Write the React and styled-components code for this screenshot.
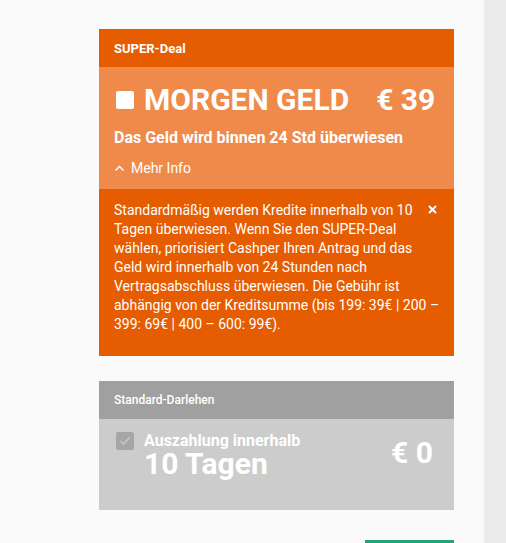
import React, { useState } from 'react'
import styled, { createGlobalStyle } from 'styled-components'

const GlobalStyle = createGlobalStyle`
  html, body {
    margin: 0;
    padding: 0;
    background: #fafafa;
    font-family: Roboto, "Liberation Sans", Arial, sans-serif;
    -webkit-font-smoothing: antialiased;
  }
`

const Layout = styled.div`
  display: grid;
  grid-template-columns: 1fr 22px;
  height: 543px;
  overflow: hidden;
`

const Main = styled.main`
  padding: 29px 0 0 99px;
  display: flex;
  flex-direction: column;
  width: 355px;
`

const Side = styled.aside`
  background: #ebebeb;
`

const Card = styled.section`
  display: flex;
  flex-direction: column;
  color: #fff;
  margin-bottom: ${p => p.$gap || 0}px;
`

const CardHead = styled.div`
  height: 38px;
  display: flex;
  align-items: center;
  padding: 0 15px;
  font-size: ${p => (p.$muted ? 12 : 13)}px;
  font-weight: ${p => (p.$muted ? 500 : 700)};
  background: ${p => (p.$muted ? '#a0a0a0' : '#e65c00')};
`

const DealBody = styled.div`
  background: #ef8a4a;
  padding: 16px 15px 0;
  height: 122px;
  box-sizing: border-box;
`

const TitleRow = styled.div`
  display: flex;
  align-items: center;
  font-size: 30px;
  font-weight: 700;
  line-height: 34px;
`

const Box = styled.span`
  width: 18px;
  height: 18px;
  border-radius: 2px;
  background: #fff;
  margin: 0 10px 0 2px;
  flex: none;
`

const Price = styled.span`
  margin-left: 27px;
`

const Sub = styled.div`
  margin-top: 11px;
  font-size: 16px;
  font-weight: 700;
  line-height: 20px;
`

const Toggle = styled.button`
  margin-top: 12px;
  display: flex;
  align-items: center;
  gap: 6px;
  background: none;
  border: none;
  padding: 0;
  color: #fff;
  font: inherit;
  font-size: 14px;
  line-height: 16px;
  cursor: pointer;
`

const Info = styled.div`
  background: #e65c00;
  padding: 12px 12px 0 15px;
  height: 167px;
  box-sizing: border-box;
  font-size: 14px;
  line-height: 19px;
`

const Close = styled.button`
  float: right;
  background: none;
  border: none;
  padding: 0;
  margin: 4px 5px 0 14px;
  width: 9px;
  height: 9px;
  display: flex;
  cursor: pointer;
`

const StdBody = styled.div`
  background: #cccccc;
  height: 91px;
  box-sizing: border-box;
  padding: 13px 21px 0 17px;
  display: flex;
  align-items: flex-start;
`

const Check = styled.span`
  width: 18px;
  height: 18px;
  border-radius: 2px;
  background: #a6a6a6;
  display: flex;
  align-items: center;
  justify-content: center;
  flex: none;
`

const StdText = styled.div`
  margin-left: 10px;
  flex: 1;
  display: flex;
  flex-direction: column;
`

const Small = styled.span`
  font-size: 16px;
  font-weight: 700;
  line-height: 18px;
`

const Big = styled.span`
  font-size: 30px;
  font-weight: 700;
  line-height: 27px;
`

const StdPrice = styled.span`
  font-size: 30px;
  font-weight: 700;
  line-height: 35px;
  margin-top: 3px;
`

const Footer = styled.div`
  display: flex;
  justify-content: flex-end;
`

const Primary = styled.button`
  width: 89px;
  height: 40px;
  border: none;
  background: #1fa67a;
  color: #fff;
`

export default function App() {
  const [open, setOpen] = useState(true)
  return (
    <>
      <GlobalStyle />
      <Layout>
        <Main>
          <Card $gap={25}>
            <CardHead>SUPER-Deal</CardHead>
            <DealBody>
              <TitleRow>
                <Box />
                MORGEN GELD
                <Price>€ 39</Price>
              </TitleRow>
              <Sub>Das Geld wird binnen 24 Std überwiesen</Sub>
              <Toggle onClick={() => setOpen(!open)}>
                <svg width="11" height="8" viewBox="0 0 11 8">
                  <path d="M1.5 6.5 L5.5 2.5 L9.5 6.5" fill="none" stroke="#fff" strokeWidth="1.5" />
                </svg>
                Mehr Info
              </Toggle>
            </DealBody>
            <Info>
              <Close aria-label="Schließen">
                <svg width="9" height="9" viewBox="0 0 9 9">
                  <path d="M1 1 L8 8 M8 1 L1 8" stroke="#fff" strokeWidth="2" />
                </svg>
              </Close>
              Standardmäßig werden Kredite innerhalb von 10 Tagen überwiesen. Wenn Sie den SUPER-Deal
              wählen, priorisiert Cashper Ihren Antrag und das Geld wird innerhalb von 24 Stunden nach
              Vertragsabschluss überwiesen. Die Gebühr ist abhängig von der Kreditsumme (bis 199: 39€ | 200 –
              399: 69€ | 400 – 600: 99€).
            </Info>
          </Card>
          <Card $gap={30}>
            <CardHead $muted>Standard-Darlehen</CardHead>
            <StdBody>
              <Check>
                <svg width="12" height="10" viewBox="0 0 12 10">
                  <path d="M1.5 5 L4.5 8 L10.5 1.5" fill="none" stroke="#c8c8c8" strokeWidth="1.6" />
                </svg>
              </Check>
              <StdText>
                <Small>Auszahlung innerhalb</Small>
                <Big>10 Tagen</Big>
              </StdText>
              <StdPrice>€ 0</StdPrice>
            </StdBody>
          </Card>
          <Footer>
            <Primary />
          </Footer>
        </Main>
        <Side />
      </Layout>
    </>
  )
}
